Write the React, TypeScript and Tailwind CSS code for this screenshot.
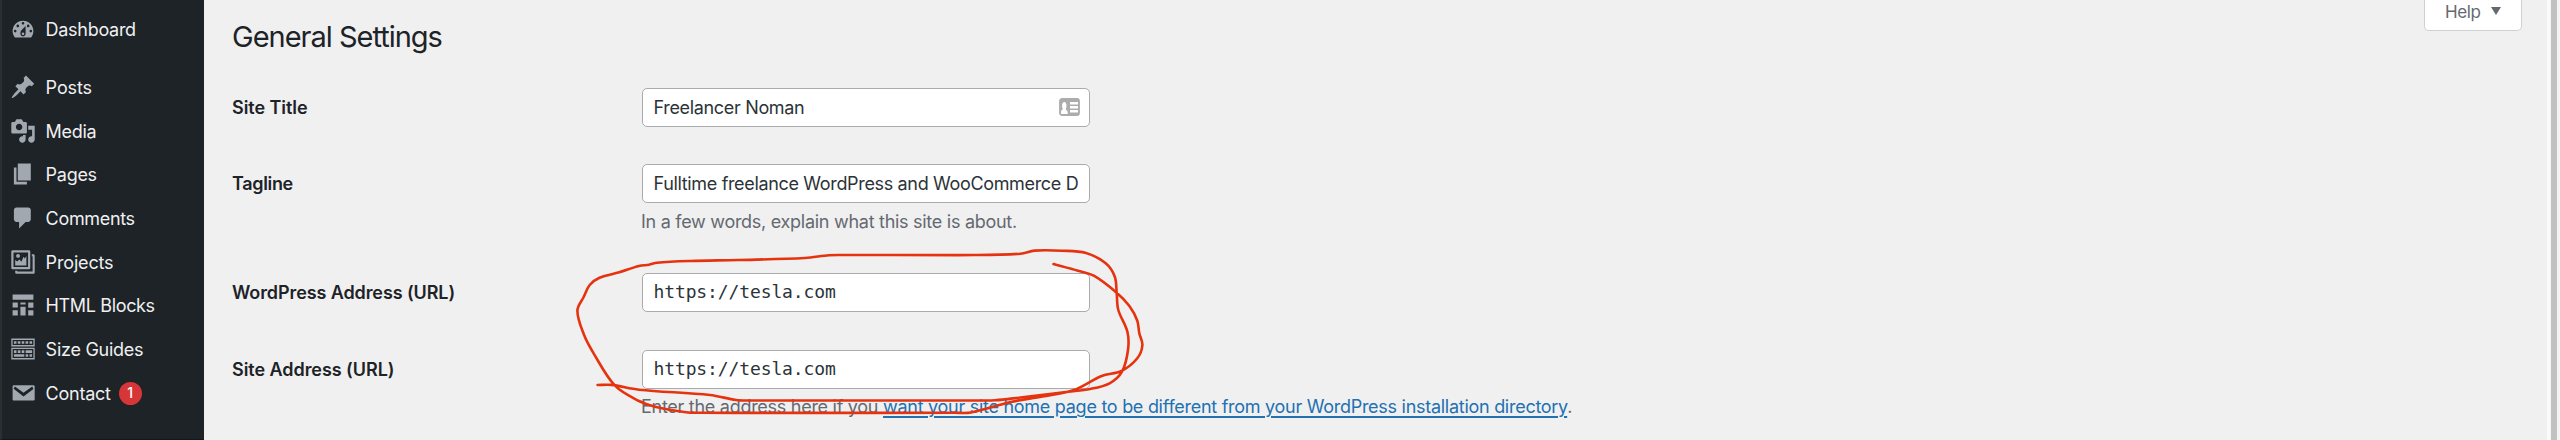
import type { ReactNode } from "react";

type Point = [number, number];

const STROKE_POINTS: Point[] = [
  [1053.5, 264], [1078, 270.7], [1093.8, 275.7], [1116.7, 292.7], [1129.4, 306], [1137.3, 320.7], [1139.3, 333.3],
  [1142.4, 345], [1137.3, 358.3], [1121.5, 371], [1101.7, 376], [1074, 390], [1042.4, 396.5], [1010.8, 402],
  [971, 412.5], [955, 412.8], [700, 412.8], [686, 412.3], [655, 406.7], [639, 401], [615, 385.7], [593.6, 353.3], [583.7, 334],
  [577.4, 310.7], [583.7, 297], [589.7, 285], [599.5, 277.7], [619.3, 272.3], [639, 266], [649, 264.7],
  [657, 262.7], [690.5, 261], [738, 260], [805, 258], [829, 255.2], [845, 255], [975, 255], [1020.6, 253.7],
  [1034.5, 250.6], [1062, 250.7], [1086, 253], [1105.7, 263.3], [1114.8, 276.7], [1116.7, 293.3], [1118.3, 310],
  [1127.4, 331.7], [1128, 350], [1122, 371.7], [1109.6, 383.3], [1090, 389], [1068, 391.7], [1018.7, 397.7],
  [995, 400.3], [980, 400.5], [750, 400.5], [736, 400], [710, 395], [639, 389.7], [611.4, 384.9], [597.6, 385],
];

function smoothPath(p: Point[]): string {
  let d = `M${p[0][0]} ${p[0][1]}`;
  for (let i = 0; i < p.length - 1; i++) {
    const a = p[Math.max(0, i - 1)];
    const b = p[i];
    const c = p[i + 1];
    const e = p[Math.min(p.length - 1, i + 2)];
    const len = Math.hypot(c[0] - b[0], c[1] - b[1]);
    const tangent = (u: Point, v: Point): Point => {
      const l = Math.hypot(v[0] - u[0], v[1] - u[1]) || 1;
      return [((v[0] - u[0]) / l) * (len / 3), ((v[1] - u[1]) / l) * (len / 3)];
    };
    const t1 = tangent(a, c);
    const t2 = tangent(b, e);
    d += `C${b[0] + t1[0]} ${b[1] + t1[1]} ${c[0] - t2[0]} ${c[1] - t2[1]} ${c[0]} ${c[1]}`;
  }
  return d;
}

function Icon({ children }: { children: ReactNode }) {
  return (
    <svg viewBox="0 0 20 20" className="h-[26px] w-[26px] shrink-0" fill="#a2a8b0" fillRule="evenodd">
      {children}
    </svg>
  );
}

const ICONS = {
  dashboard: (
    <path d="M3.76 16.6h12.48c1.1-1.37 1.76-3.11 1.76-5 0-4.42-3.58-8-8-8s-8 3.58-8 8c0 1.89.66 3.63 1.76 5zM10 4.6c.55 0 1 .45 1 1s-.45 1-1 1-1-.45-1-1 .45-1 1-1zM6 6.6c.55 0 1 .45 1 1s-.45 1-1 1-1-.45-1-1 .45-1 1-1zm8 0c.55 0 1 .45 1 1s-.45 1-1 1-1-.45-1-1 .45-1 1-1zm-5.37 4.55L12 7.6v6c0 1.1-.9 2-2 2s-2-.9-2-2c0-.57.24-2.08.63-2.45zM4 10.6c.55 0 1 .45 1 1s-.45 1-1 1-1-.45-1-1 .45-1 1-1zm12 0c.55 0 1 .45 1 1s-.45 1-1 1-1-.45-1-1 .45-1 1-1zm-5 3c0-.55-.45-1-1-1s-1 .45-1 1 .45 1 1 1 1-.45 1-1z" />
  ),
  posts: (
    <path d="M10.44 3.02l1.82-1.82 6.36 6.35-1.83 1.82c-1.05-.68-2.48-.57-3.41.36l-.75.75c-.92.93-1.04 2.35-.35 3.41l-1.83 1.82-2.41-2.41-2.8 2.79c-.42.42-3.38 2.71-3.8 2.29s1.86-3.39 2.28-3.81l2.79-2.79L4.1 9.36l1.83-1.82c1.05.69 2.48.57 3.4-.36l.75-.75c.93-.92 1.05-2.35.36-3.41z" />
  ),
  media: (
    <path d="M13 11V4c0-.55-.45-1-1-1h-1.67L9 1H5L3.67 3H2c-.55 0-1 .45-1 1v7c0 .55.45 1 1 1h10c.55 0 1-.45 1-1zM7 4.5c1.38 0 2.5 1.12 2.5 2.5S8.38 9.5 7 9.5 4.5 8.38 4.5 7 5.62 4.5 7 4.5zM14 6h5v10.5c0 1.38-1.12 2.5-2.5 2.5S14 17.88 14 16.5s1.12-2.5 2.5-2.5c.17 0 .34.02.5.05V9h-3V6zm-4 8.05V13h2v3.5c0 1.38-1.12 2.5-2.5 2.5S7 17.88 7 16.5 8.12 14 9.5 14c.17 0 .34.02.5.05z" />
  ),
  pages: <path d="M6 15V2h10v13H6zm-1 1h8v2H3V5h2v11z" />,
  comments: <path d="M5 2h9c1.1 0 2 .9 2 2v7c0 1.1-.9 2-2 2h-2l-5 5v-5H5c-1.1 0-2-.9-2-2V4c0-1.1.9-2 2-2z" />,
  projects: (
    <path d="M2 1h12.6c.55 0 1 .45 1 1v12.6c0 .55-.45 1-1 1H2c-.55 0-1-.45-1-1V2c0-.55.45-1 1-1zm.7 1.7v11.2h11.2V2.7zM4 12.6V8.4l1.6 1.2L7.2 8l1.6 1.8L10.4 6l1 1.4 1.2-2v7.2zM6.2 3.8a1.5 1.5 0 1 1 0 3 1.5 1.5 0 0 1 0-3zM16.8 4H18c.55 0 1 .45 1 1v13c0 .55-.45 1-1 1H5c-.55 0-1-.45-1-1v-1.2h1.6v.6h11.8V5.6h-.6z" />
  ),
  blocks: (
    <path d="M2 2h16v4H2zM2 8h4v4H2zM8 8h4v1.6H8zM14 8h4v4.2h-4zM8 11.4h4V18H8zM2 14h4v4H2zM14 14h4v4h-4z" />
  ),
  sizes: (
    <path d="M19 2v6H1V2h18zm-1 5V3H2v4h16zM5 4v2H3V4h2zm3 0v2H6V4h2zm3 0v2H9V4h2zm3 0v2h-2V4h2zm3 0v2h-2V4h2zm2 5v9H1V9h18zm-1 8v-7H2v7h16zM5 11v2H3v-2h2zm3 0v2H6v-2h2zm3 0v2H9v-2h2zm6 0v2h-5v-2h5zm-6 3v2H3v-2h8zm3 0v2h-2v-2h2zm3 0v2h-2v-2h2z" />
  ),
  contact: (
    <path d="M3 4h15c.55 0 1 .45 1 1v9.8c0 .55-.45 1-1 1H3c-.55 0-1-.45-1-1V5c0-.55.45-1 1-1zm7.4 8.6L18 6.9 17.1 5l-6.7 4.8L3.8 5 2.8 6.8z" />
  ),
};

function NavItem({ icon, label, tracking, children }: { icon: ReactNode; label: string; tracking: string; children?: ReactNode }) {
  return (
    <li className="flex h-[43.7px] items-center pl-[10px]">
      <Icon>{icon}</Icon>
      <span className={`ml-[9.6px] pt-[1.8px] text-[18px] leading-6 text-[#f0f0f1] ${tracking}`}>{label}</span>
      {children}
    </li>
  );
}

function Row({ label, tracking, children }: { label: string; tracking: string; children: ReactNode }) {
  return (
    <div className="flex items-start">
      <label className={`w-[410px] shrink-0 pt-2 text-[18px] leading-6 font-semibold text-[#1d2327] ${tracking}`}>{label}</label>
      <div>{children}</div>
    </div>
  );
}

function Field({ children, className, icon }: { children: ReactNode; className: string; icon?: ReactNode }) {
  return (
    <div className="flex h-[39px] w-[448px] items-center justify-between rounded-[5px] border border-[#a9abaf] bg-white pr-[9px] pl-[10.5px] text-[18px] leading-6 text-[#2c3338]">
      <span className={`whitespace-nowrap ${className}`}>{children}</span>
      {icon}
    </div>
  );
}

function ContactCard() {
  return (
    <svg viewBox="0 0 21 18" className="h-[18px] w-[21px]">
      <rect x="1" y="1" width="19" height="16" rx="2" fill="#acacac" stroke="#acacac" strokeWidth="1.8" />
      <path d="M11 4h8v2.4h-8zM11 8h8v2.4h-8zM11 12h8v2.4h-8z" fill="#fff" />
      <path d="M2 16v-2c0-1.6.8-2.2 2-2.8C2.6 9.5 2.6 4 5.3 4S8 9.5 6.500 11.200C8 12 8.800 13 8.800 16z" fill="#fff" />
    </svg>
  );
}

export default function App() {
  return (
    <div className="relative flex h-[440px] w-[2560px] overflow-hidden bg-[#f0f0f1] font-['Inter','Liberation_Sans',sans-serif]">
      <nav className="flex w-[204px] shrink-0 flex-col border-b border-l-2 border-b-[#15181b] border-l-[#2a2f34] bg-[#1d2327]">
        <ul className="-ml-[2px] flex flex-col pt-[7.5px]">
          <NavItem icon={ICONS.dashboard} label="Dashboard" tracking="tracking-[-0.29px]" />
          <li className="h-[14px]" />
          <NavItem icon={ICONS.posts} label="Posts" tracking="tracking-[-0.1px]" />
          <NavItem icon={ICONS.media} label="Media" tracking="tracking-[-0.28px]" />
          <NavItem icon={ICONS.pages} label="Pages" tracking="tracking-[-0.28px]" />
          <NavItem icon={ICONS.comments} label="Comments" tracking="tracking-[-0.33px]" />
          <NavItem icon={ICONS.projects} label="Projects" tracking="tracking-[-0.16px]" />
          <NavItem icon={ICONS.blocks} label="HTML Blocks" tracking="tracking-[-0.36px]" />
          <NavItem icon={ICONS.sizes} label="Size Guides" tracking="tracking-[-0.26px]" />
          <NavItem icon={ICONS.contact} label="Contact" tracking="tracking-[-0.24px]">
            <span className="mt-px ml-2 flex size-[23px] items-center justify-center rounded-full bg-[#d63638] text-[14px] leading-none font-medium text-white">
              1
            </span>
          </NavItem>
        </ul>
      </nav>

      <main className="grow pl-7">
        <h1 className="h-[87.5px] pt-[19px] text-[29px] leading-9 font-normal tracking-[-1.01px] text-[#1d2327]">General Settings</h1>
        <div className="h-[76.7px]">
          <Row label="Site Title" tracking="tracking-[-0.05px]">
            <Field className="pt-px tracking-[-0.33px]" icon={<ContactCard />}>
              Freelancer Noman
            </Field>
          </Row>
        </div>
        <div className="h-[108.8px]">
          <Row label="Tagline" tracking="tracking-[-0.33px]">
            <Field className="pt-[1.5px] tracking-[-0.34px]">Fulltime freelance WordPress and WooCommerce D</Field>
            <p className="-ml-px mt-[6.5px] text-[18px] leading-6 tracking-[-0.28px] text-[#646970]">
              In a few words, explain what this site is about.
            </p>
          </Row>
        </div>
        <div className="h-[76.7px]">
          <Row label="WordPress Address (URL)" tracking="tracking-[-0.1px]">
            <Field className="font-['DejaVu_Sans_Mono','Liberation_Mono',monospace] tracking-[-0.12px]">https://tesla.com</Field>
          </Row>
        </div>
        <Row label="Site Address (URL)" tracking="tracking-[-0.05px]">
          <Field className="font-['DejaVu_Sans_Mono','Liberation_Mono',monospace] tracking-[-0.12px]">https://tesla.com</Field>
          <p className="-ml-px mt-[6.5px] text-[18px] leading-6 tracking-[-0.276px] whitespace-nowrap text-[#646970]">
            Enter the address here if you{" "}
            <a className="text-[#2271b1] underline decoration-[1.5px] underline-offset-[2.5px]">
              want your site home page to be different from your WordPress installation directory
            </a>
            .
          </p>
        </Row>
      </main>

      <div className="mr-[25px] flex h-[31px] w-[98px] shrink-0 items-start justify-between rounded-b-[5px] border border-t-0 border-[#cfd0d3] bg-white px-5 pt-px text-[17px] leading-[22px] tracking-[-0.38px] text-[#646970]">
        Help
        <svg viewBox="0 0 10 8" className="mt-[6px] h-2 w-[10px]" fill="#646970">
          <path d="M0 0h10L5 8z" />
        </svg>
      </div>
      <div className="w-[13px] shrink-0 border-l-[3px] border-l-[#fafafa] bg-[#f4f4f4] pl-px">
        <div className="h-full w-[6px] bg-[#c1c1c1]" />
      </div>

      <svg viewBox="0 0 2560 440" className="pointer-events-none absolute inset-0 h-[440px] w-[2560px]">
        <path d={smoothPath(STROKE_POINTS)} fill="none" stroke="#e5330f" strokeWidth="2.6" strokeLinecap="round" strokeLinejoin="round" />
      </svg>
    </div>
  );
}
